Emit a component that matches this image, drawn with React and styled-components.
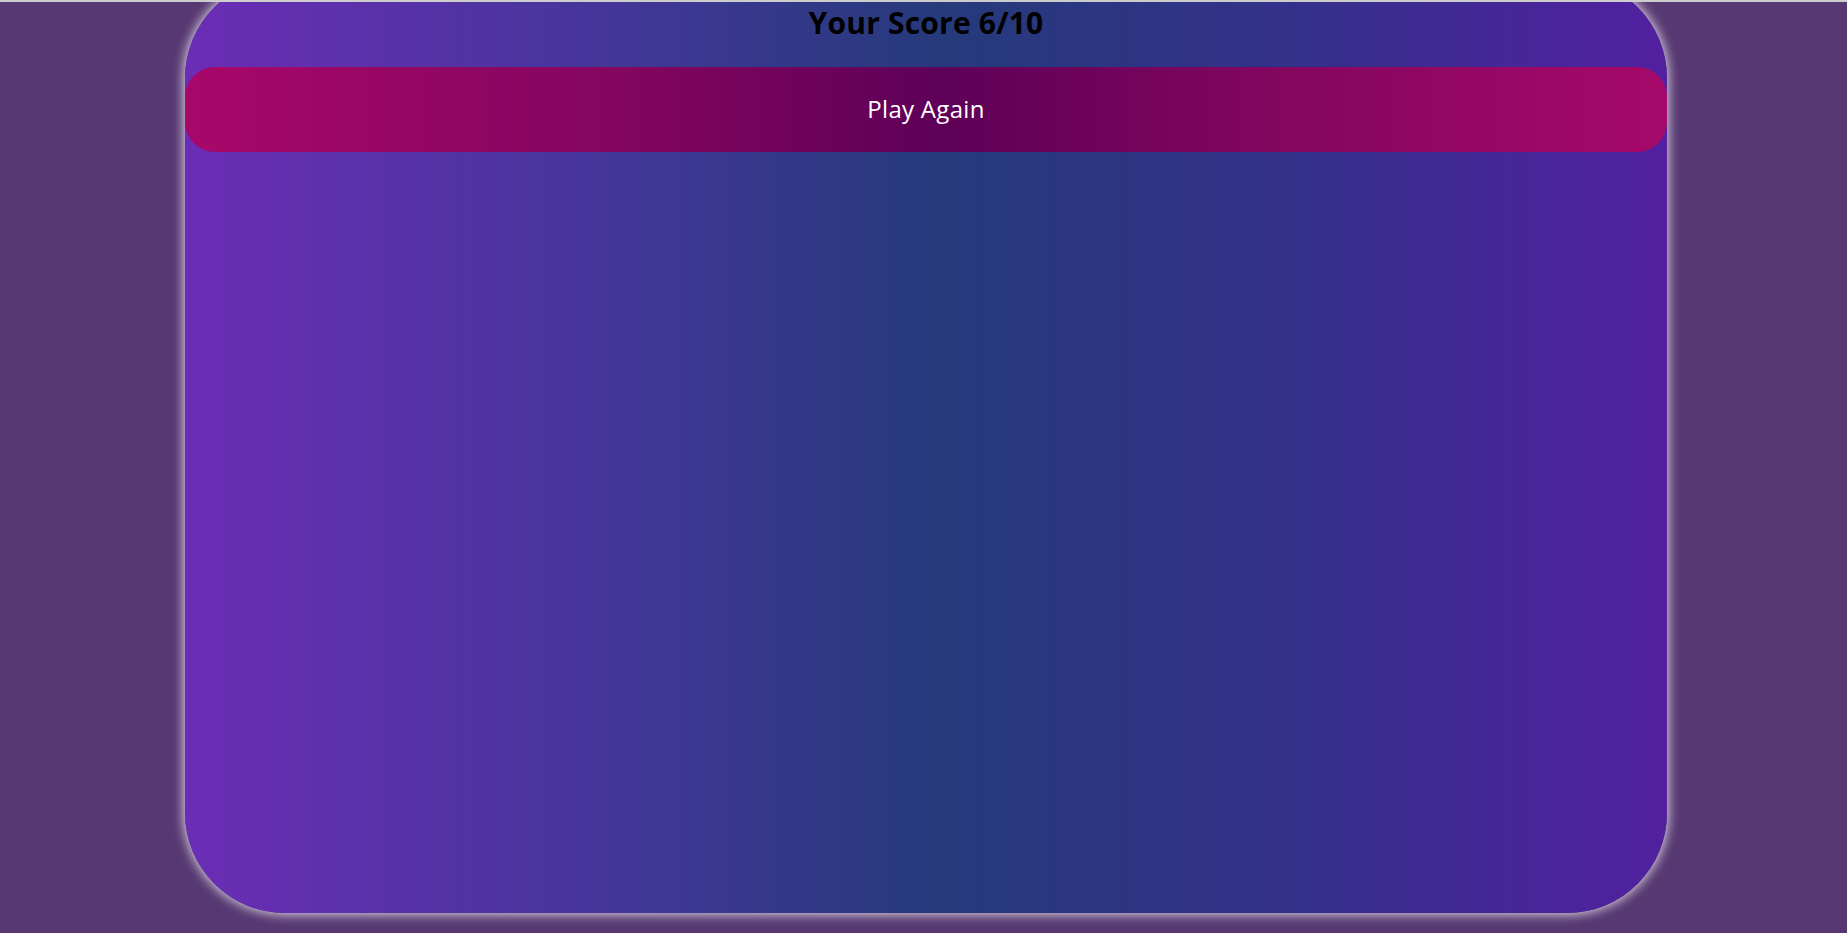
import React from "react";
import styled, { createGlobalStyle } from "styled-components";

const Global = createGlobalStyle`
  html, body {
    margin: 0;
    padding: 0;
    background: #573872;
    overflow: hidden;
    font-family: "Open Sans", "Liberation Sans", sans-serif;
  }
`;

const Page = styled.div`
  width: 1847px;
  height: 933px;
  display: flex;
  flex-direction: column;
  align-items: center;
  padding-left: 5px;
  box-sizing: border-box;
`;

const TopRule = styled.div`
  position: relative;
  z-index: 2;
  align-self: stretch;
  margin-left: -5px;
  height: 2px;
  background: #cdcdcd;
  flex-shrink: 0;
`;

const Card = styled.section`
  width: 1482px;
  height: 935px;
  margin-top: -24px;
  flex-shrink: 0;
  box-sizing: border-box;
  padding-top: 22px;
  border-radius: 100px;
  display: flex;
  flex-direction: column;
  align-items: stretch;
  background: linear-gradient(
    90deg,
    #6b2db6 0%,
    #45369a 28%,
    #253a7b 51%,
    #34308a 75%,
    #5220a0 100%
  );
  box-shadow: 0 0 12px 1px rgba(255, 255, 255, 0.85);
`;

const Title = styled.h1`
  margin: 0;
  height: 46px;
  line-height: 46px;
  text-align: center;
  font-size: 30px;
  font-weight: 700;
  color: #000;
  letter-spacing: 0.2px;
`;

const PlayButton = styled.button`
  margin-top: 21px;
  height: 85px;
  border: none;
  border-radius: 30px;
  color: #fff;
  font-family: "Open Sans", "Liberation Sans", sans-serif;
  font-size: 24px;
  font-weight: 400;
  letter-spacing: 0.3px;
  padding: 0 0 2px;
  cursor: pointer;
  background: linear-gradient(
    90deg,
    #a8076a 0%,
    #82055f 30%,
    #5e0058 51%,
    #85065f 75%,
    #a6096a 100%
  );
`;

export default function App() {
  return (
    <>
      <Global />
      <Page>
        <TopRule />
        <Card>
          <Title>Your Score 6/10</Title>
          <PlayButton>Play Again</PlayButton>
        </Card>
      </Page>
    </>
  );
}
